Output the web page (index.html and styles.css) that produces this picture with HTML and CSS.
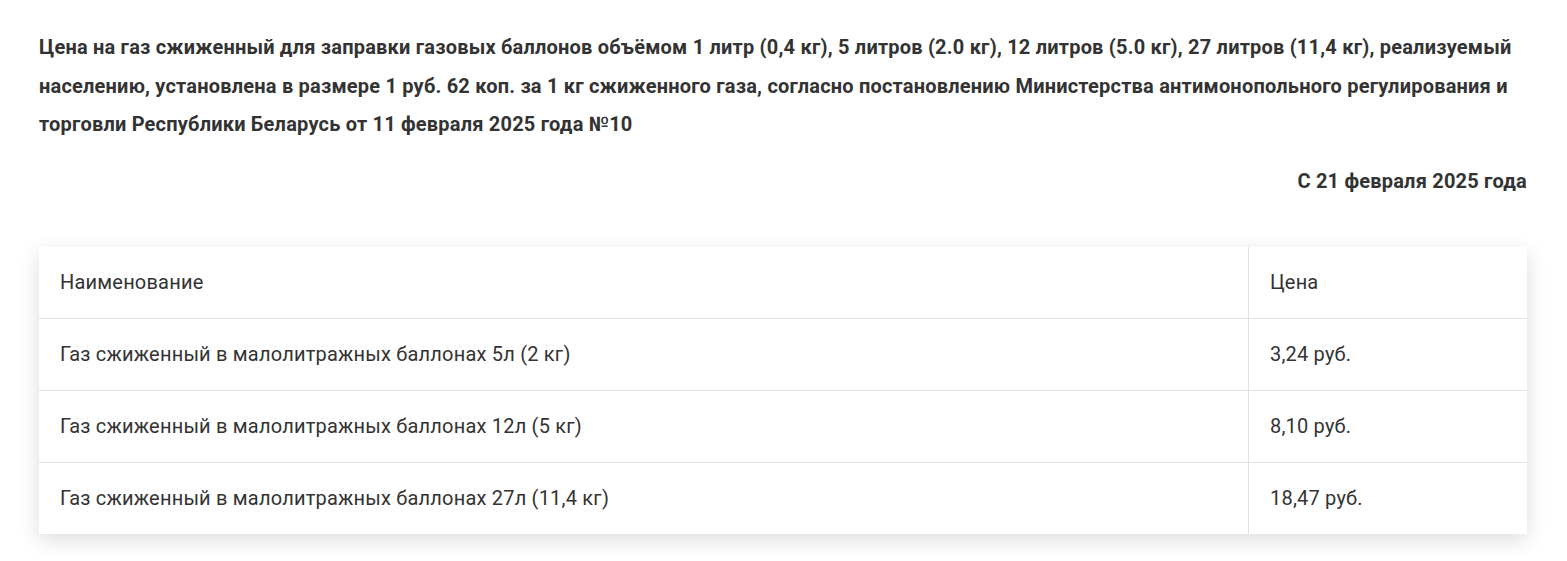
FILE: index.html
```html
<!DOCTYPE html>
<html lang="ru">
<head>
<meta charset="utf-8">
<link rel="stylesheet" href="styles.css">
</head>
<body>
<div class="content">
  <p class="intro">Цена на газ сжиженный для заправки газовых баллонов объёмом 1 литр (0,4 кг), 5 литров (2.0 кг), 12 литров (5.0 кг), 27 литров (11,4 кг), реализуемый населению, установлена в размере 1 руб. 62 коп. за 1 кг сжиженного газа, согласно постановлению Министерства антимонопольного регулирования и торговли Республики Беларусь от 11 февраля 2025 года №10</p>
  <p class="date">С 21 февраля 2025 года</p>
  <table class="prices">
    <tr><td class="name">Наименование</td><td class="price">Цена</td></tr>
    <tr><td class="name">Газ сжиженный в малолитражных баллонах 5л (2 кг)</td><td class="price">3,24 руб.</td></tr>
    <tr><td class="name">Газ сжиженный в малолитражных баллонах 12л (5 кг)</td><td class="price">8,10 руб.</td></tr>
    <tr><td class="name">Газ сжиженный в малолитражных баллонах 27л (11,4 кг)</td><td class="price">18,47 руб.</td></tr>
  </table>
</div>
</body>
</html>
```
FILE: styles.css
```css
html, body {
  margin: 0;
  padding: 0;
  background: #fff;
}
body {
  font-family: Roboto, "Liberation Sans", sans-serif;
  color: #333;
  letter-spacing: 0.2px;
}
.content {
  padding: 28px 40px 40px 39px;
}
.intro {
  margin: 0;
  font-size: 20px;
  font-weight: 700;
  line-height: 38.5px;
}
.date {
  margin: 18px 0 0;
  text-align: right;
  font-size: 20px;
  font-weight: 700;
  line-height: 38px;
}
.prices {
  margin-top: 47px;
  width: 100%;
  border-collapse: collapse;
  background: #fff;
  box-shadow: 0 6px 20px rgba(0, 0, 0, 0.14);
}
.prices td {
  font-size: 20px;
  line-height: 25px;
  padding: 23px 21px;
  color: #333;
  border-top: 1px solid #e1e1e1;
}
.prices tr:first-child td {
  border-top: none;
}
.prices td.price {
  width: 236px;
  border-left: 1px solid #e1e1e1;
}
```
